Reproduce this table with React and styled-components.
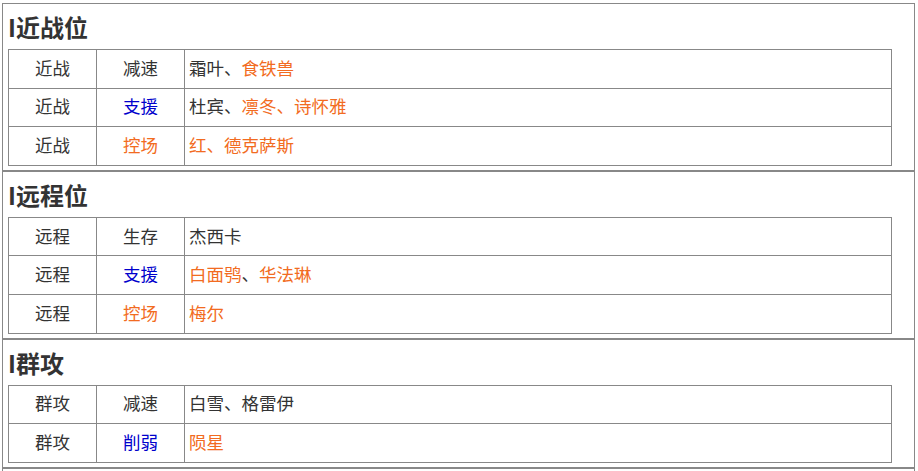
import React from "react";
import styled, { createGlobalStyle } from "styled-components";

const Global = createGlobalStyle`
  html, body { margin: 0; padding: 0; background: #fff; }
  body {
    font-family: "Noto Sans CJK SC", "Microsoft YaHei", "Liberation Sans", sans-serif;
    color: #333;
  }
`;

const Page = styled.div`
  margin: 3px 3px 0 2px;
  display: flex;
  flex-direction: column;
`;

const Section = styled.section`
  border: 1px solid #888;
  padding: 0 22px 4px 5px;
  min-height: ${(p) => (p.$stub ? "40px" : "0")};
`;

const Heading = styled.h2`
  margin: 6px 0 6px 0;
  font-size: 24px;
  line-height: 33px;
  font-weight: 700;
  color: #333;
`;

const Table = styled.table`
  width: 100%;
  border-collapse: collapse;
  table-layout: fixed;
`;

const Cell = styled.td`
  border: 1px solid #888;
  height: 38.6px;
  padding: 0 4px 2px 4px;
  box-sizing: border-box;
  font-size: 17.5px;
  line-height: 24px;
  text-align: ${(p) => (p.$center ? "center" : "left")};
  width: ${(p) => p.$w || "auto"};
  color: #333;
`;

const Tone = styled.span`
  color: ${(p) => (p.$tone === "orange" ? "#f26b21" : p.$tone === "blue" ? "#0000cc" : "#333")};
`;

const sections = [
  {
    title: "I近战位",
    rows: [
      ["近战", ["减速", null], [["霜叶、", null], ["食铁兽", "orange"]]],
      ["近战", ["支援", "blue"], [["杜宾、", null], ["凛冬、诗怀雅", "orange"]]],
      ["近战", ["控场", "orange"], [["红、德克萨斯", "orange"]]],
    ],
  },
  {
    title: "I远程位",
    rows: [
      ["远程", ["生存", null], [["杰西卡", null]]],
      ["远程", ["支援", "blue"], [["白面鸮", "orange"], ["、", null], ["华法琳", "orange"]]],
      ["远程", ["控场", "orange"], [["梅尔", "orange"]]],
    ],
  },
  {
    title: "I群攻",
    rows: [
      ["群攻", ["减速", null], [["白雪、格雷伊", null]]],
      ["群攻", ["削弱", "blue"], [["陨星", "orange"]]],
    ],
  },
];

export default function App() {
  return (
    <>
      <Global />
      <Page>
        {sections.map((s) => (
          <Section key={s.title}>
            <Heading>{s.title}</Heading>
            <Table>
              <tbody>
                {s.rows.map((r, i) => (
                  <tr key={i}>
                    <Cell $center $w="88px">{r[0]}</Cell>
                    <Cell $center $w="88px">
                      <Tone $tone={r[1][1]}>{r[1][0]}</Tone>
                    </Cell>
                    <Cell>
                      {r[2].map((seg, j) => (
                        <Tone key={j} $tone={seg[1]}>{seg[0]}</Tone>
                      ))}
                    </Cell>
                  </tr>
                ))}
              </tbody>
            </Table>
          </Section>
        ))}
        <Section $stub />
      </Page>
    </>
  );
}
